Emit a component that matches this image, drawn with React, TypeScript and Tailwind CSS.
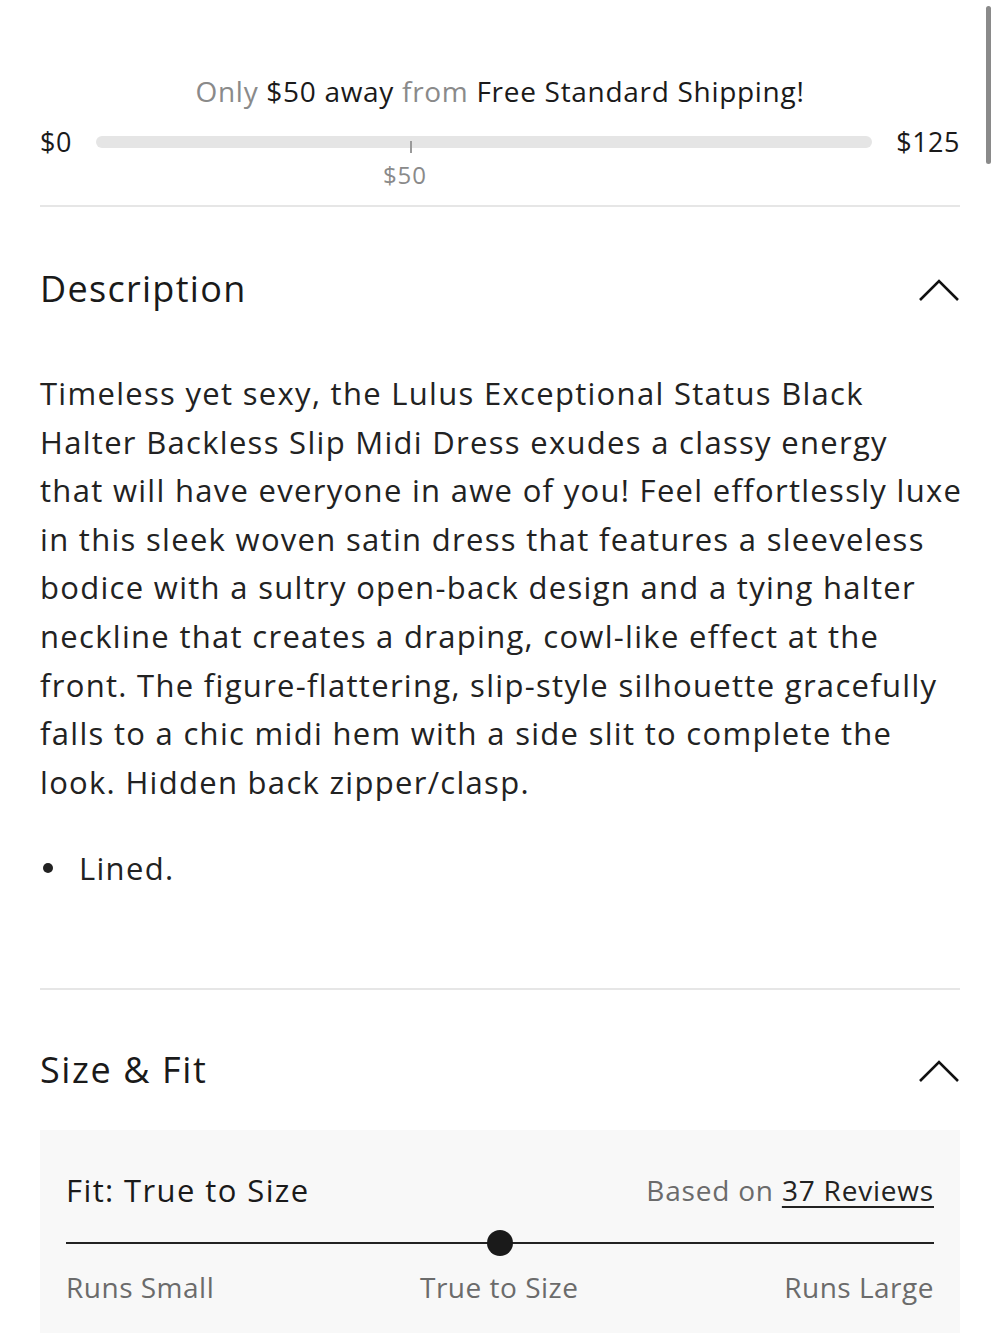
const FONT = "font-['Open_Sans','Noto_Sans',sans-serif]";

// description copy, broken where the product page wraps it
const DESCRIPTION = [
  "Timeless yet sexy, the Lulus Exceptional Status Black",
  "Halter Backless Slip Midi Dress exudes a classy energy",
  "that will have everyone in awe of you! Feel effortlessly luxe",
  "in this sleek woven satin dress that features a sleeveless",
  "bodice with a sultry open-back design and a tying halter",
  "neckline that creates a draping, cowl-like effect at the",
  "front. The figure-flattering, slip-style silhouette gracefully",
  "falls to a chic midi hem with a side slit to complete the",
  "look. Hidden back zipper/clasp.",
];

const Chevron = () => (
  <svg width="42" height="26" viewBox="0 0 42 26" fill="none" className="shrink-0">
    <path d="M2 24 L21 5 L40 24" stroke="#111" strokeWidth="2.6" />
  </svg>
);

const App: React.FC = () => {
  return (
    <div className={`relative w-[1000px] min-h-[1333px] bg-white overflow-hidden text-[#1a1a1a] ${FONT}`}>
      {/* scroll thumb */}
      <div className="absolute right-[9px] top-[6px] w-[5px] h-[158px] rounded-full bg-[#8a8a8a]" />

      <div className="px-10">
        {/* free shipping progress */}
        <div className="pt-[72px] pb-[7px] border-b-2 border-[#e6e6e6]">
          <p className="text-center text-[28px] leading-[38px] tracking-[0.7px]">
            <span className="text-[#8a8a8a]">Only </span>
            <span>$50 away </span>
            <span className="text-[#8a8a8a]">from </span>
            <span>Free Standard Shipping!</span>
          </p>
          <div className="flex items-center gap-6 mt-[14px]">
            <span className="text-[27px] leading-[36px] tracking-[0.5px]">$0</span>
            <div className="relative flex-1 h-[12px] rounded-full bg-[#e5e5e5]">
              <div className="absolute left-[314px] top-[5px] w-[2px] h-[12px] bg-[#9a9a9a]" />
              <span className="absolute left-[309px] top-[24px] -translate-x-1/2 text-[24px] leading-[30px] tracking-[0.8px] text-[#8a8a8a]">
                $50
              </span>
            </div>
            <span className="text-[27px] leading-[36px] tracking-[0.5px]">$125</span>
          </div>
          <div className="h-[38px]" />
        </div>

        {/* description */}
        <div className="flex items-center justify-between pt-[60px]">
          <h2 className="text-[36px] leading-[44px] tracking-[1.3px]">Description</h2>
          <Chevron />
        </div>
        <p className="mt-[58px] text-[31px] leading-[48.6px] tracking-[1.3px] text-[#222] whitespace-nowrap">
          {DESCRIPTION.map((line, i) => (
            <span key={i}>
              {line}
              {i < DESCRIPTION.length - 1 && <br />}
            </span>
          ))}
        </p>
        <ul className="mt-[38px] text-[31px] leading-[48px] tracking-[1.3px] text-[#222]">
          <li className="flex items-center">
            <span className="w-[10px] h-[10px] rounded-full bg-[#222] ml-[3px] mr-[26px]" />
            Lined.
          </li>
        </ul>
        <div className="mt-[96px] border-b-2 border-[#e6e6e6]" />

        {/* size & fit */}
        <div className="flex items-center justify-between pt-[58px]">
          <h2 className="text-[36px] leading-[44px] tracking-[1.6px]">Size &amp; Fit</h2>
          <Chevron />
        </div>
        <div className="mt-[38px] bg-[#f8f8f8] px-[26px] pt-[41px] pb-[80px]">
          <div className="flex items-center justify-between">
            <span className="text-[31px] leading-[38px] tracking-[1.4px]">Fit: True to Size</span>
            <span className="text-[28px] leading-[38px] tracking-[0.8px] text-[#6b6b6b]">
              Based on{" "}
              <span className="text-[#222] underline underline-offset-[5px] decoration-2">37 Reviews</span>
            </span>
          </div>
          <div className="relative mt-[33px] h-[2px] bg-[#222]">
            <div className="absolute left-1/2 top-1/2 -translate-x-1/2 -translate-y-1/2 w-[26px] h-[26px] rounded-full bg-[#1a1a1a]" />
          </div>
          <div className="flex items-center justify-between mt-[25px] text-[28px] leading-[36px] tracking-[0.5px] text-[#6b6b6b]">
            <span>Runs Small</span>
            <span>True to Size</span>
            <span>Runs Large</span>
          </div>
        </div>
      </div>
    </div>
  );
};

export default App;
